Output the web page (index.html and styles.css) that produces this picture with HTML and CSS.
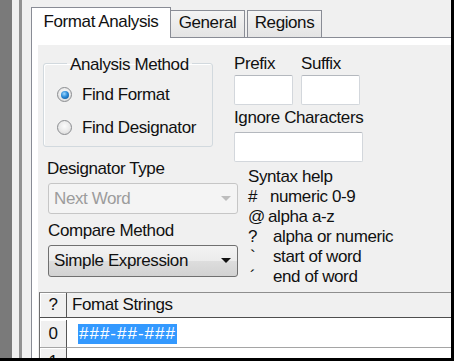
FILE: index.html
```html
<!DOCTYPE html>
<html lang="en">
<head>
    <meta charset="UTF-8">
    <title>Format Analysis</title>
    <link rel="stylesheet" href="styles.css">
</head>
<body>
    <div class="window">
        <div class="side"></div>
        <div class="splitter"></div>
        <div class="tabs">
            <div class="tab-strip">
                <div class="tab active">Format Analysis</div>
                <div class="tab general">General</div>
                <div class="tab regions">Regions</div>
            </div>
            <div class="panel">
                <div class="content">
                    <div class="top">
                        <div class="col-left">
                            <fieldset class="group">
                                <legend>Analysis Method</legend>
                                <div class="option"><span class="radio"><span class="dot"></span></span>Find Format</div>
                                <div class="option"><span class="radio"></span>Find Designator</div>
                            </fieldset>
                            <div class="field-label designator">Designator Type</div>
                            <div class="combo disabled">
                                <span>Next Word</span>
                                <svg width="10" height="6" viewBox="0 0 10 6"><path d="M0 0h10L5 5z"/></svg>
                            </div>
                            <div class="field-label compare">Compare Method</div>
                            <div class="combo">
                                <span>Simple Expression</span>
                                <svg width="10" height="6" viewBox="0 0 10 6"><path d="M0 0h10L5 5z"/></svg>
                            </div>
                        </div>
                        <div class="col-right">
                            <div class="affix">
                                <div>
                                    <div class="field-label">Prefix</div>
                                    <div class="textbox"></div>
                                </div>
                                <div>
                                    <div class="field-label">Suffix</div>
                                    <div class="textbox"></div>
                                </div>
                            </div>
                            <div class="field-label ignore">Ignore Characters</div>
                            <div class="textbox wide"></div>
                            <div class="syntax">
                                <div>Syntax help</div>
                                <div><span class="sym hash">#</span>numeric 0-9</div>
                                <div><span class="sym at">@</span>alpha a-z</div>
                                <div><span class="sym">?</span>alpha or numeric</div>
                                <div><span class="sym tick">`</span>start of word</div>
                                <div><span class="sym tick">´</span>end of word</div>
                            </div>
                        </div>
                    </div>
                    <div class="grid">
                        <div class="cell head rowhead">?</div>
                        <div class="cell head title">Fomat Strings</div>
                        <div class="cell rowhead">0</div>
                        <div class="cell data"><span class="selected">###-##-###</span></div>
                        <div class="cell rowhead">1</div>
                        <div class="cell data"></div>
                    </div>
                </div>
            </div>
        </div>
    </div>
</body>
</html>
```

FILE: styles.css
```css
body {
    margin: 0;
    font-family: "Liberation Sans", Arial, sans-serif;
    font-size: 17px;
    letter-spacing: -0.4px;
    line-height: 20px;
    color: #111;
}

.window {
    display: flex;
    width: 454px;
    height: 361px;
    box-sizing: border-box;
    border-right: 3px solid #000;
    border-bottom: 3px solid #000;
    background-color: #f0f0f0;
    overflow: hidden;
}

.side {
    width: 12px;
    flex-shrink: 0;
    background-color: #7a7a7a;
}

.splitter {
    width: 3px;
    flex-shrink: 0;
    margin: 0 9px 0 7px;
    background-color: #929292;
}

.tabs {
    flex: 1;
    min-width: 0;
}

/* tab headers */
.tab-strip {
    display: flex;
    align-items: flex-end;
    height: 37px;
}

.tab {
    height: 27px;
    box-sizing: border-box;
    padding-top: 2px;
    border: 1px solid #898c95;
    border-bottom: none;
    background: linear-gradient(#f4f4f4, #e4e4e4);
    text-align: center;
}

.tab.active {
    position: relative;
    z-index: 1;
    width: 140px;
    height: 31px;
    margin-bottom: -1px;
    padding: 4px 0 0 0;
    background: #fff;
}

.tab.general {
    width: 74px;
    border-left: none;
}

.tab.regions {
    width: 75px;
    margin-left: 2px;
}

.panel {
    width: 440px;
    height: 340px;
    box-sizing: border-box;
    border: 1px solid #898c95;
    padding: 7px 0 0 6px;
    background-color: #fff;
}

.content {
    height: 100%;
    background-color: #f0f0f0;
}

.top {
    display: flex;
    align-items: flex-start;
}

.col-left {
    width: 196px;
    flex-shrink: 0;
    padding-top: 6px;
}

/* group box */
.group {
    width: 170px;
    box-sizing: border-box;
    margin: 0 0 0 5px;
    padding: 3px 0 2px 13px;
    border: 1px solid #d2d9de;
    border-radius: 3px;
    box-shadow: inset 1px 1px 0 #fff;
}

.group legend {
    margin-left: 10px;
    padding: 4px 3px 0;
    line-height: 20px;
}

.option {
    display: flex;
    align-items: center;
    gap: 10px;
    height: 33px;
}

.radio {
    display: flex;
    align-items: center;
    justify-content: center;
    width: 15px;
    height: 15px;
    box-sizing: border-box;
    border: 1px solid #8b8d90;
    border-radius: 50%;
    background: radial-gradient(circle at 50% 40%, #fbfbfb 0, #e9e9e9 55%, #cfcfcf 100%);
}

.radio .dot {
    width: 8px;
    height: 8px;
    border-radius: 50%;
    background: radial-gradient(circle at 40% 35%, #9ed8ff 0, #2a8ad8 45%, #0b4d8c 100%);
}

.field-label {
    height: 20px;
}

.field-label.designator {
    margin-top: 12px;
    padding-left: 9px;
}

.field-label.compare {
    margin-top: 7px;
    padding-left: 10px;
}

/* combo boxes */
.combo {
    display: flex;
    align-items: center;
    justify-content: space-between;
    width: 190px;
    height: 32px;
    box-sizing: border-box;
    margin: 4px 0 0 10px;
    padding: 0 6px 0 5px;
    border: 1px solid #707070;
    border-radius: 3px;
    background: linear-gradient(#f3f3f3 0, #ebebeb 50%, #dddddd 51%, #d2d2d2 100%);
}

.combo svg {
    fill: #111;
}

.combo.disabled {
    height: 31px;
    border-color: #c6c6c6;
    background: #f4f4f4;
    color: #9c9c9c;
}

.combo.disabled svg {
    fill: #bdbdbd;
}

/* right column */
.col-right {
    flex: 1;
    padding-top: 9px;
}

.affix {
    display: grid;
    grid-template-columns: 59px 59px;
    column-gap: 8px;
}

.textbox {
    height: 30px;
    box-sizing: border-box;
    margin-top: 1px;
    border: 1px solid #d3d7dc;
    border-top-color: #b4b8be;
    border-radius: 2px;
    background-color: #fff;
}

.field-label.ignore {
    margin-top: 3px;
}

.textbox.wide {
    width: 129px;
    margin-top: 4px;
}

.syntax {
    margin-top: 5px;
    padding-left: 14px;
}

.sym {
    display: inline-block;
    width: 25px;
}

.sym.hash {
    width: 22px;
}

.sym.at {
    width: 20px;
}

.sym.tick {
    padding-left: 2px;
    width: 23px;
}

/* format strings grid */
.grid {
    display: grid;
    grid-template-columns: 27px 1fr;
    grid-auto-rows: 27px 28px 28px;
    margin: 5px 0 0 1px;
    border-top: 1px solid #8e8e8e;
    border-left: 1px solid #6d6d6d;
    background-color: #fff;
}

.cell {
    display: flex;
    align-items: center;
    box-sizing: border-box;
    border-bottom: 1px solid #a5a5a5;
}

.cell.head {
    height: 25px;
    border-bottom-color: #4e4e4e;
    background-color: #f0f0f0;
}

.cell.rowhead {
    justify-content: center;
    border-right: 1px solid #555;
    background-color: #f0f0f0;
    box-shadow: inset 1px 1px 0 #fff;
}

.cell.title {
    padding-left: 5px;
}

.cell.data {
    padding-left: 11px;
}

.selected {
    padding: 0 1px;
    background-color: #3399ff;
    color: #fff;
    letter-spacing: 1px;
}
```
